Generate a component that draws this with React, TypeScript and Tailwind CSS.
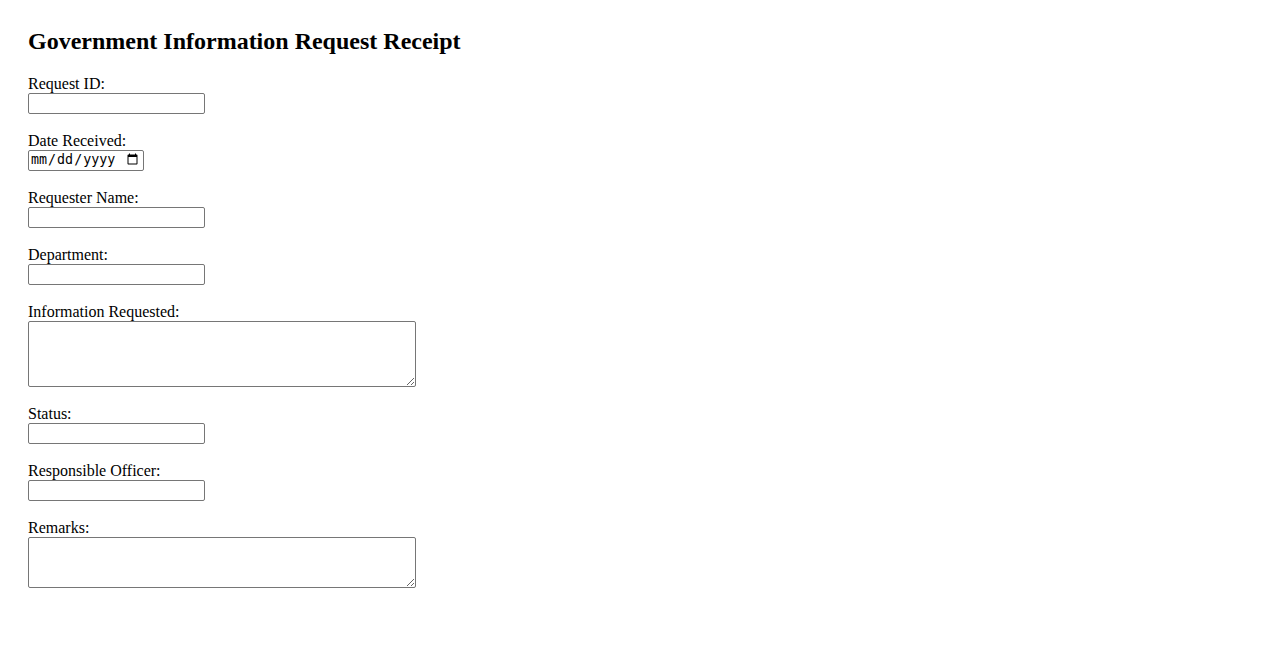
import React from "react";

const serif = { fontFamily: '"Liberation Serif", "Times New Roman", serif' };

function TextField({ label, id }: { label: string; id: string }) {
  return (
    <div className="mb-[18px]">
      <label htmlFor={id} className="block text-[16px] leading-[18px]">
        {label}
      </label>
      <input
        id={id}
        type="text"
        className="block w-[177px] h-[21px] border border-[#767676] rounded-[2px] px-[2px] text-[13.33px] bg-white"
      />
    </div>
  );
}

function AreaField({ label, id, h }: { label: string; id: string; h: string }) {
  return (
    <div className="mb-[18px]">
      <label htmlFor={id} className="block text-[16px] leading-[18px]">
        {label}
      </label>
      <textarea
        id={id}
        className={`block w-[388px] ${h} border border-[#767676] rounded-[2px] px-[2px] text-[13.33px] bg-white resize`}
      />
    </div>
  );
}

export default function App() {
  return (
    <div className="min-h-[650px] bg-white text-black pl-[28px] pt-[28px]" style={serif}>
      <h2 className="text-[24px] font-bold leading-[27.6px] mb-[19px]">
        Government Information Request Receipt
      </h2>
      <form>
        <TextField label="Request ID:" id="rid" />
        <div className="mb-[18px]">
          <label htmlFor="date" className="block text-[16px] leading-[18px]">
            Date Received:
          </label>
          <input
            id="date"
            type="date"
            className="block w-[116px] h-[21px] border border-[#767676] rounded-[2px] pl-[1px] pr-[2px] text-[13.33px] bg-white"
            style={{ fontFamily: '"DejaVu Sans Mono", "Liberation Mono", monospace' }}
          />
        </div>
        <TextField label="Requester Name:" id="rname" />
        <TextField label="Department:" id="dept" />
        <AreaField label="Information Requested:" id="info" h="h-[66px]" />
        <TextField label="Status:" id="status" />
        <TextField label="Responsible Officer:" id="officer" />
        <AreaField label="Remarks:" id="remarks" h="h-[51px]" />
      </form>
    </div>
  );
}
